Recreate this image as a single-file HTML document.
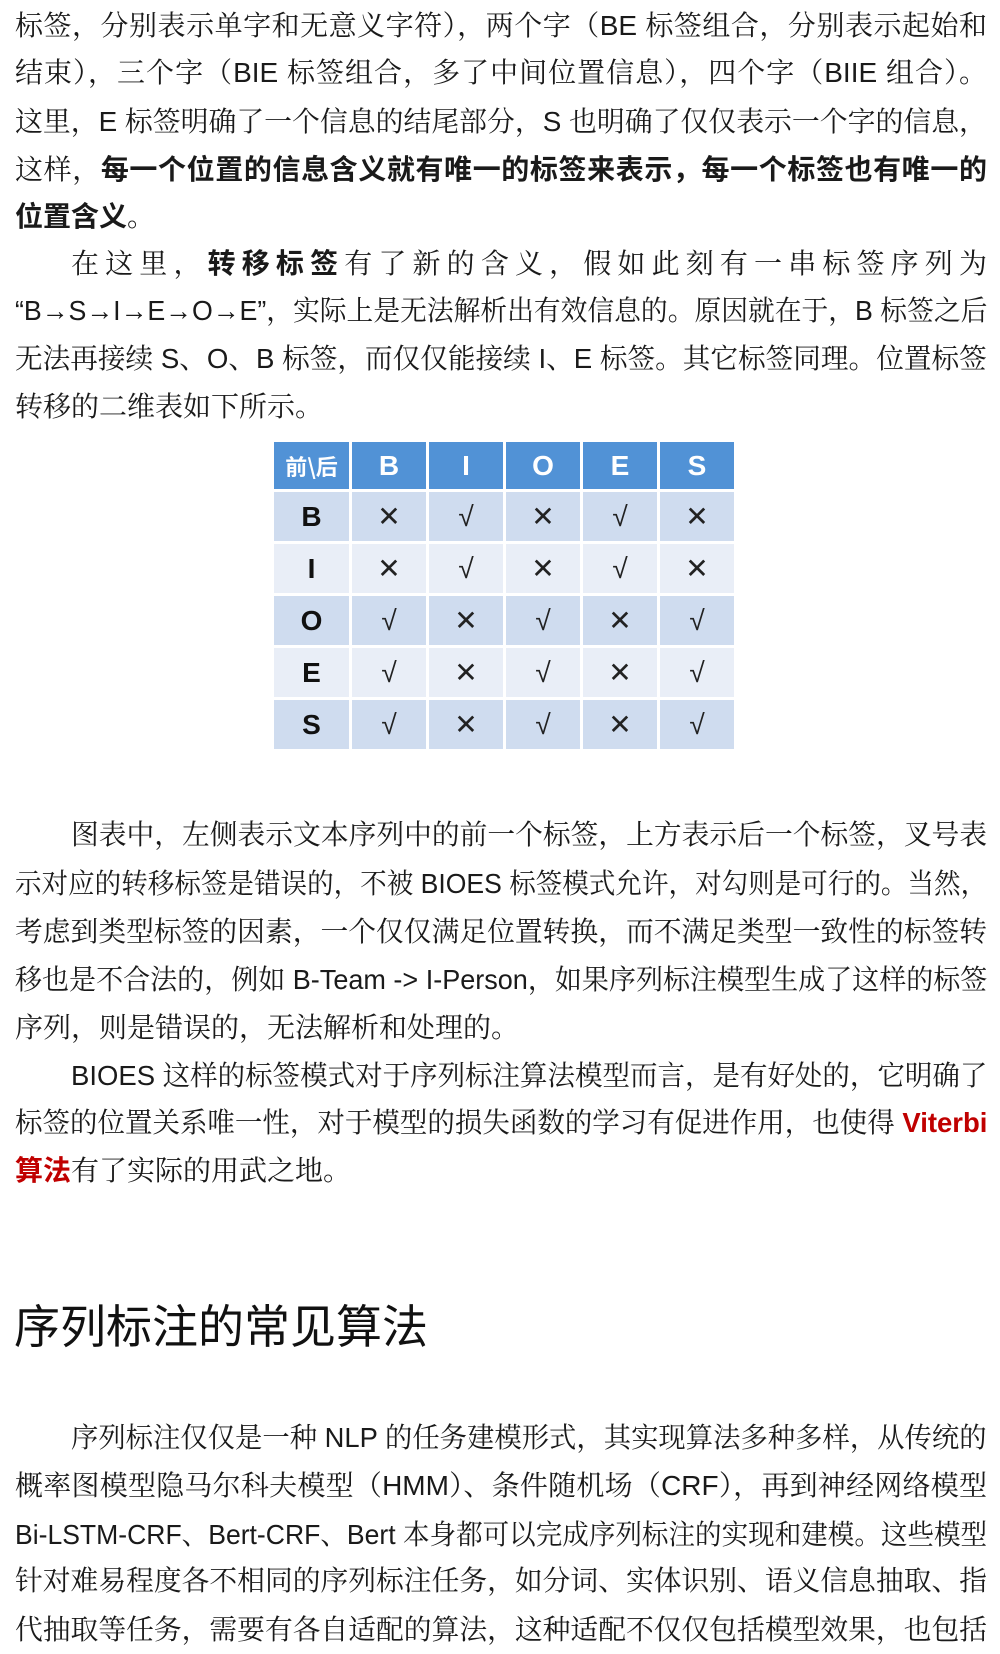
<!DOCTYPE html>
<html><head><meta charset="utf-8">
<style>
body{margin:0;background:#fff;width:1000px;height:1621px;position:relative;overflow:hidden;
font-family:"Liberation Sans","Noto Serif CJK SC",serif;color:#1a1a1a;}
.l{position:absolute;left:15px;width:972px;height:48px;line-height:48px;font-size:28px;white-space:nowrap;
text-align:justify;text-align-last:justify;}
.n{text-align-last:left;}
.i{left:71px;width:916px;}
b{font-weight:bold;font-family:"Liberation Sans","Noto Sans CJK SC",sans-serif;}
.red{color:#c00000;font-weight:bold;font-family:"Liberation Sans","Noto Sans CJK SC",sans-serif;}
h1{position:absolute;left:14px;top:1294px;margin:0;font-size:46px;line-height:60px;font-weight:normal;
font-family:"Noto Sans CJK SC",sans-serif;color:#111;}
table{position:absolute;left:274px;top:442px;border-collapse:separate;border-spacing:3px;margin:-3px;
font-family:"Liberation Sans",sans-serif;}
td{width:74px;height:49px;text-align:center;font-size:28px;padding:0;color:#222;}
td.f{width:75px;font-weight:bold;font-size:28px;color:#111;}
tr.h td{background:#5192d6;color:#fff;font-weight:bold;height:47px;}
tr.h td.f{font-family:"Noto Sans CJK SC",sans-serif;font-size:22px;}
tr.a td{background:#cfdcef;}
tr.b td{background:#e9eef7;}
</style></head><body>
<div class="l" style="top:2px">标签，分别表示单字和无意义字符），两个字（BE 标签组合，分别表示起始和</div>
<div class="l" style="top:49px">结束），三个字（BIE 标签组合，多了中间位置信息），四个字（BIIE 组合）。</div>
<div class="l" style="top:98px">这里，E 标签明确了一个信息的结尾部分，S 也明确了仅仅表示一个字的信息，</div>
<div class="l" style="top:146px">这样，<b>每一个位置的信息含义就有唯一的标签来表示，每一个标签也有唯一的</b></div>
<div class="l n" style="top:193px"><b>位置含义</b>。</div>
<div class="l i" style="top:240px">在这里，<b>转移标签</b>有了新的含义，假如此刻有一串标签序列为</div>
<div class="l" style="top:287px">“B→S→I→E→O→E”，实际上是无法解析出有效信息的。原因就在于，B 标签之后</div>
<div class="l" style="top:335px">无法再接续 S、O、B 标签，而仅仅能接续 I、E 标签。其它标签同理。位置标签</div>
<div class="l n" style="top:383px">转移的二维表如下所示。</div>

<table>
<tr class="h"><td class="f">前\后</td><td>B</td><td>I</td><td>O</td><td>E</td><td>S</td></tr>
<tr class="a"><td class="f">B</td><td>✕</td><td>√</td><td>✕</td><td>√</td><td>✕</td></tr>
<tr class="b"><td class="f">I</td><td>✕</td><td>√</td><td>✕</td><td>√</td><td>✕</td></tr>
<tr class="a"><td class="f">O</td><td>√</td><td>✕</td><td>√</td><td>✕</td><td>√</td></tr>
<tr class="b"><td class="f">E</td><td>√</td><td>✕</td><td>√</td><td>✕</td><td>√</td></tr>
<tr class="a"><td class="f">S</td><td>√</td><td>✕</td><td>√</td><td>✕</td><td>√</td></tr>
</table>

<div class="l i" style="top:811px">图表中，左侧表示文本序列中的前一个标签，上方表示后一个标签，叉号表</div>
<div class="l" style="top:860px">示对应的转移标签是错误的，不被 BIOES 标签模式允许，对勾则是可行的。当然，</div>
<div class="l" style="top:908px">考虑到类型标签的因素，一个仅仅满足位置转换，而不满足类型一致性的标签转</div>
<div class="l" style="top:956px">移也是不合法的，例如 B-Team -&gt; I-Person，如果序列标注模型生成了这样的标签</div>
<div class="l n" style="top:1004px">序列，则是错误的，无法解析和处理的。</div>
<div class="l i" style="top:1052px">BIOES 这样的标签模式对于序列标注算法模型而言，是有好处的，它明确了</div>
<div class="l" style="top:1099px">标签的位置关系唯一性，对于模型的损失函数的学习有促进作用，也使得 <span class="red">Viterbi</span></div>
<div class="l n" style="top:1147px"><span class="red">算法</span>有了实际的用武之地。</div>

<h1>序列标注的常见算法</h1>

<div class="l i" style="top:1414px">序列标注仅仅是一种 NLP 的任务建模形式，其实现算法多种多样，从传统的</div>
<div class="l" style="top:1462px">概率图模型隐马尔科夫模型（HMM）、条件随机场（CRF），再到神经网络模型</div>
<div class="l" style="top:1511px">Bi-LSTM-CRF、Bert-CRF、Bert 本身都可以完成序列标注的实现和建模。这些模型</div>
<div class="l" style="top:1557px">针对难易程度各不相同的序列标注任务，如分词、实体识别、语义信息抽取、指</div>
<div class="l" style="top:1606px">代抽取等任务，需要有各自适配的算法，这种适配不仅仅包括模型效果，也包括</div>
<script>
document.querySelectorAll('.l').forEach(function(d){
  var w=d.clientWidth;
  if(d.scrollWidth>w+1){
    var s=document.createElement('span');
    s.style.display='inline-block';s.style.whiteSpace='nowrap';
    while(d.firstChild)s.appendChild(d.firstChild);
    d.appendChild(s);
    var sw=s.offsetWidth;
    s.style.transformOrigin='0 0';
    s.style.transform='scaleX('+(w/sw)+')';
    d.style.textAlignLast='left';d.style.textAlign='left';
  }
});
</script>
</body></html>
